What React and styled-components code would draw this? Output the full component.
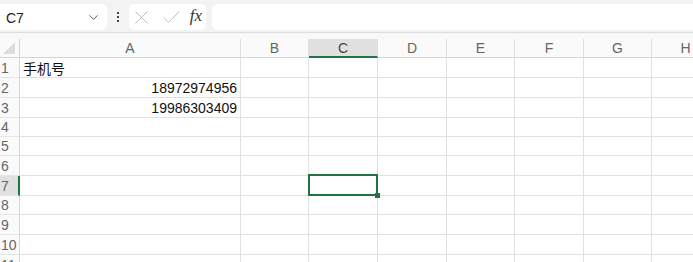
import React from 'react'
import styled, { createGlobalStyle } from 'styled-components'
import { ChevronDown, X, Check } from 'lucide-react'

const columns = [
  { name: 'A', width: 221 },
  { name: 'B', width: 68 },
  { name: 'C', width: 69 },
  { name: 'D', width: 69 },
  { name: 'E', width: 68 },
  { name: 'F', width: 69 },
  { name: 'G', width: 68 },
  { name: 'H', width: 68 },
]

const rowHeights = [20, 20, 20, 19, 19, 20, 20, 19, 20, 20, 20]

const data = {
  '1-A': { text: '手机号', align: 'left' },
  '2-A': { text: '18972974956', align: 'right' },
  '3-A': { text: '19986303409', align: 'right' },
}

const selected = { row: 7, col: 'C' }

function App() {
  return (
    <Page>
      <GlobalStyle />
      <Toolbar>
        <NameBox>
          <span>C7</span>
          <ChevronDown size={15} strokeWidth={1.4} color="#444" />
        </NameBox>
        <Dots>
          <i /><i /><i />
        </Dots>
        <FormulaButtons>
          <X size={23} strokeWidth={0.9} color="#b3b3b3" />
          <Check size={23} strokeWidth={0.9} color="#b3b3b3" />
          <Fx>fx</Fx>
        </FormulaButtons>
        <FormulaInput />
      </Toolbar>
      <Sheet>
        <HeaderRow>
          <Corner>
            <svg width="12" height="12" viewBox="0 0 12 12">
              <path d="M12 0 L12 12 L0 12 Z" fill="#dcdcdc" />
            </svg>
          </Corner>
          {columns.map(c => (
            <ColHeader key={c.name} width={c.width} active={c.name === selected.col}>
              {c.name}
            </ColHeader>
          ))}
        </HeaderRow>
        {rowHeights.map((h, i) => {
          const r = i + 1
          return (
            <Row key={r} height={h}>
              <RowHeader active={r === selected.row}>{r}</RowHeader>
              {columns.map(c => {
                const cell = data[`${r}-${c.name}`]
                return (
                  <Cell
                    key={c.name}
                    width={c.width}
                    align={cell ? cell.align : 'left'}
                    selected={r === selected.row && c.name === selected.col}
                  >
                    {cell && cell.text}
                  </Cell>
                )
              })}
            </Row>
          )
        })}
      </Sheet>
    </Page>
  )
}

export default App

const GlobalStyle = createGlobalStyle`
  html, body {
    margin: 0;
    padding: 0;
    overflow: hidden;
    background: #fff;
  }
  body {
    font-family: "Liberation Sans", "Noto Sans CJK SC", sans-serif;
  }
`

const Page = styled.div`
  width: 693px;
  height: 262px;
  overflow: hidden;
  background: #fff;
`

const Toolbar = styled.div`
  display: flex;
  align-items: center;
  height: 33px;
  padding: 4px 0 2px 0;
  box-sizing: border-box;
  background: #f3f3f3;
  border-bottom: 1px solid #dcdcdc;
`

const NameBox = styled.div`
  display: flex;
  align-items: center;
  justify-content: space-between;
  width: 107px;
  height: 26px;
  box-sizing: border-box;
  padding: 0 6px 0 6px;
  background: #fff;
  border-radius: 0 5px 5px 0;
  font-size: 14px;
  color: #222;
  span{
    padding-top: 1px;
  }
`

const Dots = styled.div`
  display: flex;
  flex-direction: column;
  align-items: center;
  gap: 2px;
  width: 22px;
  i{
    display: block;
    width: 2px;
    height: 2px;
    background: #444;
  }
`

const FormulaButtons = styled.div`
  display: flex;
  align-items: center;
  justify-content: space-between;
  width: 77px;
  height: 26px;
  box-sizing: border-box;
  padding: 0 4px 0 1px;
  background: #fff;
  border-radius: 5px;
`

const Fx = styled.span`
  font-family: "Liberation Serif", serif;
  font-style: italic;
  font-size: 17px;
  color: #333;
  padding-bottom: 2px;
`

const FormulaInput = styled.div`
  flex: 1;
  height: 26px;
  margin-left: 6px;
  background: #fff;
  border-radius: 5px 0 0 5px;
`

const Sheet = styled.div`
  padding-top: 6px;
  background: #f8f8f8;
`

const HeaderRow = styled.div`
  display: flex;
  height: 19px;
  background: #fafafa;
`

const Corner = styled.div`
  display: flex;
  align-items: flex-end;
  justify-content: flex-end;
  width: 20px;
  flex-shrink: 0;
  box-sizing: border-box;
  padding: 0 4px 3px 0;
  border-right: 1px solid #d4d4d4;
  border-bottom: 1px solid #d4d4d4;
`

const ColHeader = styled.div`
  display: flex;
  align-items: center;
  justify-content: center;
  width: ${p => p.width}px;
  flex-shrink: 0;
  box-sizing: border-box;
  font-size: 14px;
  color: ${p => p.active ? '#444' : '#666'};
  background: ${p => p.active ? '#e1e1e1' : 'transparent'};
  border-right: 1px solid #e0e0e0;
  border-bottom: ${p => p.active ? '2px solid #217346' : '1px solid #d4d4d4'};
`

const Row = styled.div`
  display: flex;
  height: ${p => p.height}px;
  background: #fff;
`

const RowHeader = styled.div`
  display: flex;
  align-items: center;
  width: 20px;
  flex-shrink: 0;
  box-sizing: border-box;
  padding-left: 1px;
  font-size: 14px;
  color: #666;
  background: ${p => p.active ? '#e1e1e1' : '#fafafa'};
  border-right: ${p => p.active ? '2px solid #217346' : '1px solid #d4d4d4'};
  border-bottom: 1px solid #e6e6e6;
`

const Cell = styled.div`
  position: relative;
  display: flex;
  align-items: center;
  justify-content: ${p => p.align === 'right' ? 'flex-end' : 'flex-start'};
  width: ${p => p.width}px;
  flex-shrink: 0;
  box-sizing: border-box;
  padding: 1px 3px 0 3px;
  font-size: 14px;
  color: #111;
  white-space: nowrap;
  border-right: 1px solid #e1e1e1;
  border-bottom: 1px solid #e1e1e1;
  z-index: ${p => p.selected ? 2 : 0};
  &::before{
    content: '';
    display: ${p => p.selected ? 'block' : 'none'};
    position: absolute;
    top: -2px;
    left: -1px;
    right: -1px;
    bottom: -1px;
    border: 2px solid #217346;
  }
  &::after{
    content: '';
    display: ${p => p.selected ? 'block' : 'none'};
    position: absolute;
    right: -3px;
    bottom: -3px;
    width: 5px;
    height: 5px;
    background: #217346;
  }
`
